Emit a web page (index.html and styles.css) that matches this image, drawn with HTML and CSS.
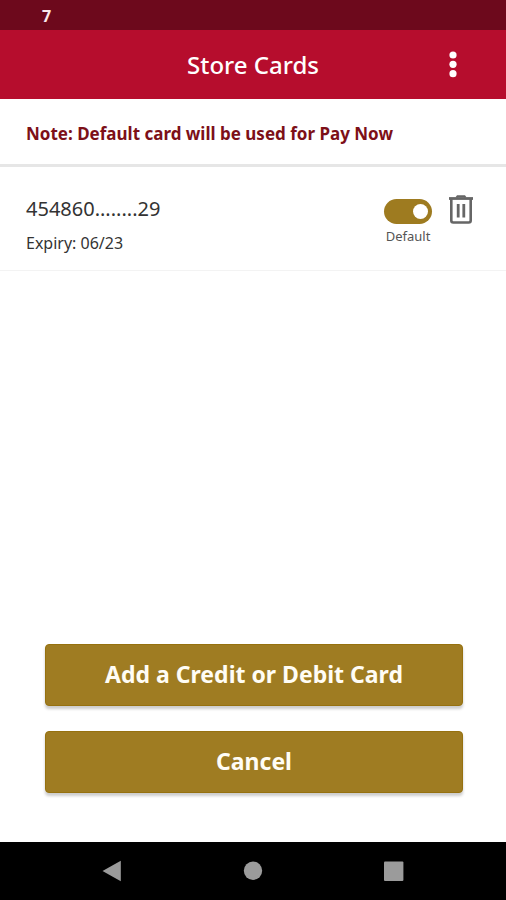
FILE: index.html
```html
<!DOCTYPE html>
<html lang="en">

<head>
    <meta charset="UTF-8">
    <meta name="viewport" content="width=device-width, initial-scale=1.0">
    <title>Store Cards</title>
    <link rel="stylesheet" href="styles.css">
</head>

<body>
    <div class="status-bar">7</div>
    <header class="app-bar">
        <h1>Store Cards</h1>
        <button class="icon-button menu-button" aria-label="More options">
            <svg width="8" height="28" viewBox="0 0 8 28" fill="#fff">
                <circle cx="4" cy="4" r="3.6" />
                <circle cx="4" cy="13.3" r="3.6" />
                <circle cx="4" cy="22.7" r="3.6" />
            </svg>
        </button>
    </header>
    <main>
        <p class="note">Note: Default card will be used for Pay Now</p>
        <div class="card-row">
            <div class="card-info">
                <div class="card-number">454860........29</div>
                <div class="card-expiry">Expiry: 06/23</div>
            </div>
            <div class="default-toggle">
                <input type="checkbox" id="defaultCard" class="switch" checked>
                <label for="defaultCard">Default</label>
            </div>
            <button class="icon-button" aria-label="Delete card">
                <svg width="26" height="30" viewBox="0 0 26 30" fill="none" stroke="#666">
                    <path d="M1 3.5H25" stroke-width="2.8" />
                    <path d="M8.5 2.5L9.5 1.2H16.5L17.5 2.5" stroke-width="2" />
                    <path d="M3.3 4V25.5Q3.3 27.5 5.3 27.5H20.7Q22.7 27.5 22.7 25.5V4" stroke-width="2.6" />
                    <path d="M10.2 9V22.5M15.8 9V22.5" stroke-width="2.8" />
                </svg>
            </button>
        </div>
        <div class="actions">
            <button class="action-button">Add a Credit or Debit Card</button>
            <button class="action-button">Cancel</button>
        </div>
    </main>
    <nav class="nav-bar">
        <button class="icon-button" aria-label="Back">
            <svg width="22" height="22" viewBox="0 0 22 22" fill="#9b9b9b">
                <path d="M1.5 11L19.8 .7V21.3Z" />
            </svg>
        </button>
        <button class="icon-button" aria-label="Home">
            <svg width="22" height="22" viewBox="0 0 22 22" fill="#9b9b9b">
                <circle cx="11" cy="10.7" r="9.2" />
            </svg>
        </button>
        <button class="icon-button" aria-label="Recent apps">
            <svg width="22" height="22" viewBox="0 0 22 22" fill="#9b9b9b">
                <rect x="1" y="1.5" width="19.4" height="19.4" rx="1" />
            </svg>
        </button>
    </nav>
</body>

</html>
```

FILE: styles.css
```css
* {
    box-sizing: border-box;
}

body {
    display: flex;
    flex-direction: column;
    min-height: 100vh;
    margin: 0;
    background-color: #fff;
    color: #333;
    font-family: "Noto Sans", "Open Sans", sans-serif;
}

button {
    font-family: inherit;
    cursor: pointer;
}

.icon-button {
    display: flex;
    padding: 0;
    border: none;
    background: none;
}

.status-bar {
    height: 30px;
    padding-left: 42px;
    background-color: #6d091c;
    color: #fbe9ec;
    font-size: 16px;
    font-weight: bold;
    line-height: 32px;
}

.app-bar {
    display: grid;
    grid-template-columns: 1fr auto 1fr;
    align-items: center;
    height: 69px;
    padding: 0 49px;
    background-color: #b60d2d;
    color: #fff;
}

.app-bar h1 {
    grid-column: 2;
    margin: 0;
    font-size: 24px;
    font-weight: 500;
    line-height: 32px;
}

.menu-button {
    justify-self: end;
}

main {
    display: flex;
    flex: 1;
    flex-direction: column;
}

.note {
    margin: 0;
    padding: 23px 26px 18px;
    border-bottom: 3px solid #e6e6e6;
    color: #7d1018;
    font-size: 17px;
    font-weight: bold;
    line-height: 24px;
}

.card-row {
    display: flex;
    align-items: flex-start;
    gap: 16px;
    padding: 28px 32px 15px 26px;
    border-bottom: 1px solid #f3f3f3;
}

.card-info {
    flex: 1;
}

.card-number {
    margin-bottom: 8px;
    font-size: 20px;
    line-height: 28px;
}

.card-expiry {
    font-size: 16px;
    line-height: 24px;
}

.default-toggle {
    display: flex;
    flex-direction: column;
    align-items: center;
    gap: 4px;
    padding-top: 4px;
    color: #555;
    font-size: 13px;
    line-height: 16px;
}

.switch {
    display: flex;
    align-items: center;
    justify-content: flex-end;
    width: 48px;
    height: 25px;
    margin: 0;
    padding: 0 4px;
    border-radius: 13px;
    background-color: #bbb;
    appearance: none;
    cursor: pointer;
}

.switch::before {
    width: 15px;
    height: 15px;
    border-radius: 50%;
    background-color: #fff;
    content: "";
}

.switch:not(:checked) {
    justify-content: flex-start;
}

.switch:checked {
    background-color: #9e7b20;
}

.actions {
    display: flex;
    flex-direction: column;
    gap: 25px;
    margin-top: auto;
    padding: 24px 43px 49px 45px;
}

.action-button {
    height: 62px;
    padding-bottom: 4px;
    border: 1px solid #96710f;
    border-radius: 4px;
    background-color: #9f7c22;
    box-shadow: 0 3px 3px rgba(0, 0, 0, 0.2);
    color: #fffdf5;
    font-size: 23px;
    font-weight: bold;
}

.nav-bar {
    display: flex;
    justify-content: space-between;
    align-items: center;
    height: 58px;
    padding: 0 20%;
    background-color: #000;
}
```
